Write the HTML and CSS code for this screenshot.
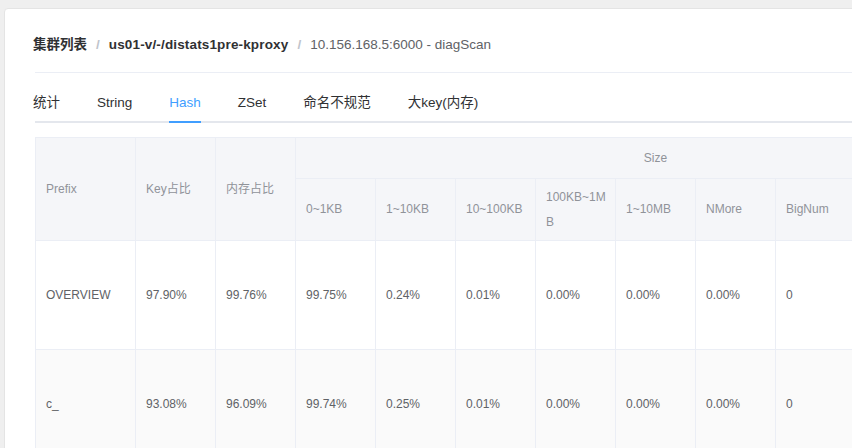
FILE: index.html
```html
<!DOCTYPE html>
<html lang="zh-CN">
<head>
<meta charset="utf-8">
<title>Hash</title>
<link rel="stylesheet" href="styles.css">
</head>
<body>
<div class="page">
  <div class="card">
    <div class="crumbs">
      <span class="crumb strong">集群列表</span>
      <span class="sep">/</span>
      <span class="crumb strong wide">us01-v/-/distats1pre-kproxy</span>
      <span class="sep">/</span>
      <span class="crumb">10.156.168.5:6000 - diagScan</span>
    </div>
    <div class="tabs">
      <div class="tab">统计</div>
      <div class="tab">String</div>
      <div class="tab active">Hash</div>
      <div class="tab">ZSet</div>
      <div class="tab">命名不规范</div>
      <div class="tab">大key(内存)</div>
    </div>
    <table class="grid">
      <colgroup>
        <col class="c-prefix">
        <col class="c-n"><col class="c-n"><col class="c-n"><col class="c-n">
        <col class="c-n"><col class="c-n"><col class="c-n"><col class="c-n">
        <col class="c-last">
      </colgroup>
      <thead>
        <tr class="h1">
          <th rowspan="2">Prefix</th>
          <th rowspan="2">Key占比</th>
          <th rowspan="2">内存占比</th>
          <th colspan="7" class="center">Size</th>
        </tr>
        <tr class="h2">
          <th>0~1KB</th>
          <th>1~10KB</th>
          <th>10~100KB</th>
          <th>100KB~1MB</th>
          <th>1~10MB</th>
          <th>NMore</th>
          <th>BigNum</th>
        </tr>
      </thead>
      <tbody>
        <tr>
          <td>OVERVIEW</td><td>97.90%</td><td>99.76%</td><td>99.75%</td><td>0.24%</td><td>0.01%</td><td>0.00%</td><td>0.00%</td><td>0.00%</td><td>0</td>
        </tr>
        <tr class="stripe">
          <td>c_</td><td>93.08%</td><td>96.09%</td><td>99.74%</td><td>0.25%</td><td>0.01%</td><td>0.00%</td><td>0.00%</td><td>0.00%</td><td>0</td>
        </tr>
      </tbody>
    </table>
  </div>
</div>
</body>
</html>
```
FILE: styles.css
```css
html, body {
  margin: 0;
  padding: 0;
}
body {
  background: #efefef;
  overflow: hidden;
  font-family: "Liberation Sans", "Noto Sans CJK SC", sans-serif;
  color: #303133;
}
.page {
  padding: 8px 0 0 4px;
}
.card {
  width: 1100px;
  height: 700px;
  background: #fff;
  border: 1px solid #e4e4e4;
  border-radius: 4px;
  padding: 0 30px;
}
.crumbs {
  display: flex;
  align-items: center;
  font-size: 13.5px;
  line-height: 16px;
  padding: 28px 0 19px;
  border-bottom: 1px solid #ebeef5;
}
.crumbs .crumb:first-child {
  margin-left: -2px;
}
.crumb {
  color: #606266;
}
.crumb.strong {
  color: #303133;
  font-weight: bold;
}
.crumb.wide {
  letter-spacing: 0.15px;
}
.sep {
  color: #c0c4cc;
  margin: 0 9px;
  font-weight: bold;
}
.tabs {
  display: flex;
  margin-top: 10px;
  height: 40px;
  box-shadow: inset 0 -2px 0 #e4e7ed;
}
.tab {
  position: relative;
  padding: 0 18.5px;
  line-height: 40px;
  font-size: 13.5px;
  color: #303133;
}
.tab:first-child {
  padding-left: 0;
  margin-left: -2px;
}
.tab.active {
  color: #409eff;
}
.tab.active::after {
  content: "";
  position: absolute;
  left: 18.5px;
  right: 18.5px;
  bottom: 0;
  height: 2px;
  background: #409eff;
}
.grid {
  margin-top: 14px;
  border-collapse: separate;
  border-spacing: 0;
  table-layout: fixed;
  width: 981px;
  border-left: 1px solid #ebeef5;
  border-top: 1px solid #ebeef5;
  font-size: 12px;
}
.c-prefix { width: 100px; }
.c-n { width: 80px; }
.c-last { width: 240px; }
.grid th,
.grid td {
  border-right: 1px solid #ebeef5;
  border-bottom: 1px solid #ebeef5;
  padding: 0 6px 0 10px;
  line-height: 25px;
  text-align: left;
  vertical-align: middle;
  word-break: break-all;
  font-weight: normal;
}
.grid th {
  background: #f5f6f9;
  color: #909399;
}
.grid th.center {
  text-align: center;
  padding-right: 0;
  padding-left: 0;
}
.grid td {
  color: #606266;
  background: #fff;
}
.grid .h1 { height: 41px; }
.grid .h2 { height: 62px; }
.grid tbody tr { height: 109px; }
.grid tr.stripe td {
  background: #fafafa;
}
```
